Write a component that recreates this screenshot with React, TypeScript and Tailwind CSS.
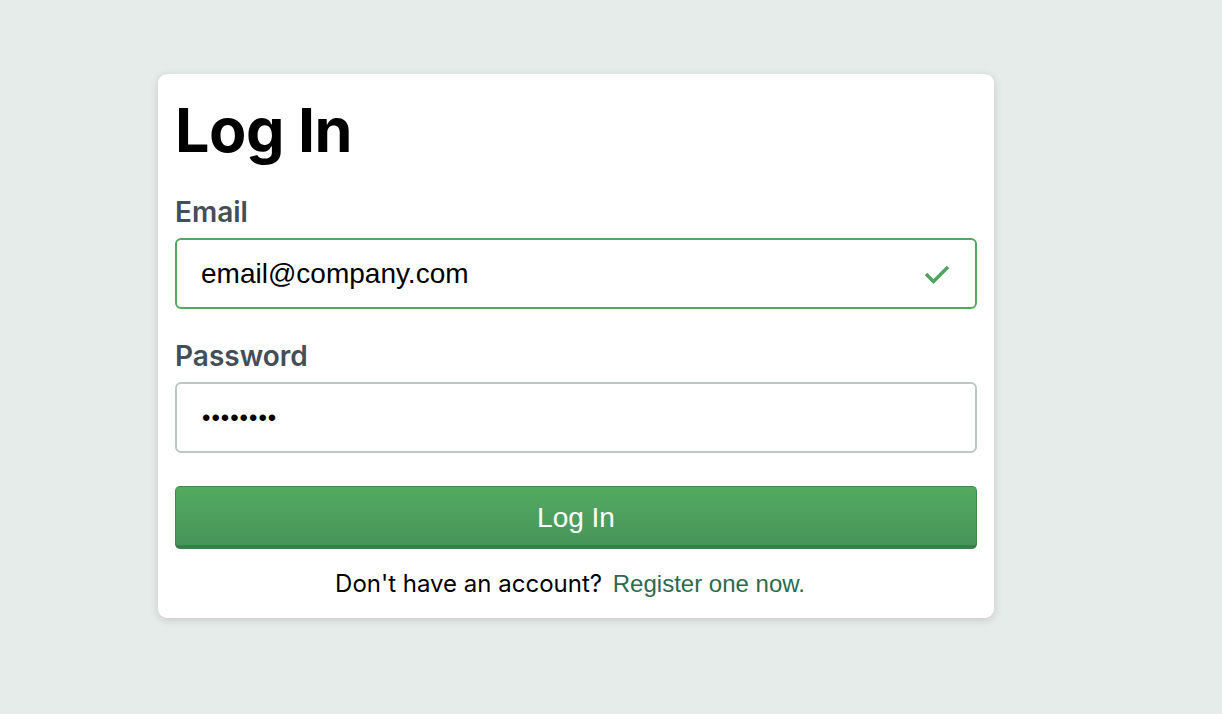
import React from 'react';

const App = () => {
  return (
    <div className="min-h-[714px] w-full bg-[#e6ecea] pt-[74px] pl-[158px]" style={{ fontFamily: 'Inter, "Noto Sans", sans-serif' }}>
      <div className="w-[836px] rounded-[9px] bg-white px-[17px] pb-[19px] shadow-[0_2px_8px_rgba(0,0,0,0.15)]">
        <h1 className="pt-[16px] text-[61px] font-bold leading-[80px] text-black tracking-[-0.5px]">Log In</h1>

        <label className="mt-[26px] block text-[28px] font-semibold leading-[32px] text-[#434e57]">Email</label>
        <div className="mt-[10px] flex h-[71px] items-center rounded-[6px] border-2 border-[#52a860] pl-[24px] pr-[24px]">
          <span className="flex-1 text-[28px] text-black" style={{ fontFamily: '"Liberation Sans", Arial, sans-serif' }}>email@company.com</span>
          <svg width="28" height="22" viewBox="0 0 28 22" fill="none">
            <path d="M3 11 L10.5 18.5 L25 4" stroke="#4fa55d" strokeWidth="3.5" />
          </svg>
        </div>

        <label className="mt-[31px] block text-[28px] font-semibold leading-[32px] text-[#434e57]">Password</label>
        <div className="mt-[10px] flex h-[71px] items-center rounded-[6px] border-2 border-[#bcc6c3] pl-[25px]">
          <span className="text-[24px] tracking-[1px] text-black" style={{ fontFamily: '"Liberation Sans", Arial, sans-serif' }}>••••••••</span>
        </div>

        <button className="mt-[33px] flex h-[63px] w-full items-center justify-center rounded-[5px] border border-[#3f8a4b] border-b-[4px] border-b-[#3a7d46] bg-gradient-to-b from-[#53aa60] to-[#47955a] pt-[4px] text-[28px] text-white" style={{ fontFamily: '"Liberation Sans", Arial, sans-serif' }}>
          Log In
        </button>

        <p className="mt-[20px] pr-[12px] text-center text-[24px] leading-[30px] text-black">
          Don't have an account?{' '}
          <a className="ml-[4px] text-[#2d6a4d]" style={{ fontFamily: '"Liberation Sans", Arial, sans-serif' }}>Register one now.</a>
        </p>
      </div>
    </div>
  );
};

export default App;
